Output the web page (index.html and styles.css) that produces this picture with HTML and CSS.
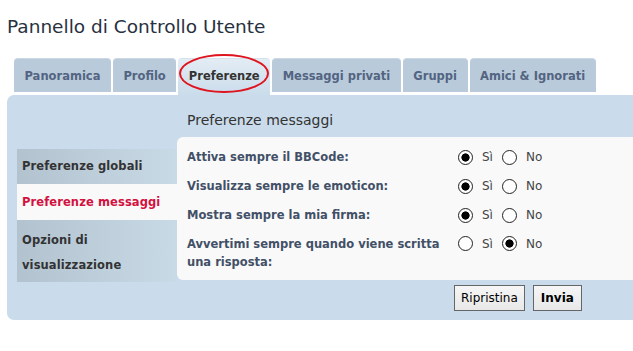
FILE: index.html
```html
<!DOCTYPE html>
<html lang="it">
<head>
<meta charset="utf-8">
<title>Pannello di Controllo Utente</title>
<link rel="stylesheet" href="styles.css">
</head>
<body>
<div class="page">
  <h2 class="title">Pannello di Controllo Utente</h2>
  <ul class="tabs">
    <li class="tab">Panoramica</li>
    <li class="tab">Profilo</li>
    <li class="tab active">Preferenze<span class="mark"></span></li>
    <li class="tab">Messaggi privati</li>
    <li class="tab">Gruppi</li>
    <li class="tab">Amici &amp; Ignorati</li>
  </ul>
  <div class="panel">
    <ul class="nav">
      <li class="nav-item">Preferenze globali</li>
      <li class="nav-item current">Preferenze messaggi</li>
      <li class="nav-item">Opzioni di visualizzazione</li>
    </ul>
    <div class="main">
      <h3 class="heading">Preferenze messaggi</h3>
      <div class="box">
        <div class="row">
          <span class="label">Attiva sempre il BBCode:</span>
          <span class="choices"><input type="radio" name="a" checked><span class="opt">Sì</span><input type="radio" name="a"><span class="opt">No</span></span>
        </div>
        <div class="row">
          <span class="label">Visualizza sempre le emoticon:</span>
          <span class="choices"><input type="radio" name="b" checked><span class="opt">Sì</span><input type="radio" name="b"><span class="opt">No</span></span>
        </div>
        <div class="row">
          <span class="label">Mostra sempre la mia firma:</span>
          <span class="choices"><input type="radio" name="c" checked><span class="opt">Sì</span><input type="radio" name="c"><span class="opt">No</span></span>
        </div>
        <div class="row">
          <span class="label">Avvertimi sempre quando viene scritta una risposta:</span>
          <span class="choices"><input type="radio" name="d"><span class="opt">Sì</span><input type="radio" name="d" checked><span class="opt">No</span></span>
        </div>
      </div>
      <div class="buttons">
        <button class="btn">Ripristina</button>
        <button class="btn primary">Invia</button>
      </div>
    </div>
  </div>
</div>
</body>
</html>
```
FILE: styles.css
```css
html, body {
  margin: 0;
  padding: 0;
  background: #fff;
  overflow: hidden;
}
body {
  font-family: "DejaVu Sans", Verdana, sans-serif;
  color: #333;
}
.page {
  padding: 0 0 0 7px;
}
.title {
  margin: 0;
  padding-top: 15px;
  height: 58px;
  box-sizing: border-box;
  font-size: 18.5px;
  font-weight: normal;
  color: #28313f;
  line-height: 24px;
}
.tabs {
  list-style: none;
  margin: 0 0 0 7px;
  padding: 0;
  display: flex;
  gap: 2px;
  height: 37px;
}
.tab {
  position: relative;
  height: 34px;
  box-sizing: border-box;
  padding: 0 10.5px;
  display: flex;
  align-items: center;
  background: #b9cbda;
  border-top: 1px solid #c9d8e4;
  border-radius: 4px 4px 0 0;
  font-size: 11.5px;
  font-weight: bold;
  color: #536482;
}
.tab.active {
  height: 37px;
  padding-bottom: 3px;
  background: linear-gradient(#e3ecf4, #cadceb);
  border-top-color: #d6e2ec;
  color: #333;
}
.mark {
  position: absolute;
  left: 1px;
  top: -5px;
  width: 90px;
  height: 39px;
  box-sizing: border-box;
  border: 2px solid #e0141e;
  border-radius: 50%;
}
.panel {
  display: flex;
  margin-right: -40px;
  padding: 0 0 9px 10px;
  background: #cadceb;
  border-radius: 7px 0 0 7px;
}
.nav {
  list-style: none;
  margin: 54px 0 0;
  padding: 0;
  width: 160px;
  flex: none;
  align-self: flex-start;
}
.nav-item {
  padding: 5px 6px 5px 5px;
  line-height: 25px;
  font-size: 11.5px;
  font-weight: bold;
  letter-spacing: 0.1px;
  color: #333;
  background: linear-gradient(to right, #b2c2cf, #c9dae7);
}
.nav-item.current {
  background: #f9f9f9;
  color: #d31141;
  padding-top: 6px;
}
.nav-item:last-child {
  padding-top: 8px;
  padding-bottom: 4px;
}
.main {
  flex: 1;
  min-width: 0;
}
.heading {
  margin: 0;
  height: 42px;
  padding: 15px 0 0 10px;
  box-sizing: border-box;
  font-size: 14px;
  font-weight: normal;
  color: #333;
  line-height: 20px;
}
.box {
  background: #f9f9f9;
  border-radius: 6px 0 0 6px;
  padding: 6px 0 3px 10px;
}
.row {
  display: flex;
  align-items: flex-start;
  padding: 6px 0;
  line-height: 17px;
}
.row:last-child {
  line-height: 18px;
  padding-top: 5px;
}
.label {
  width: 271px;
  flex: none;
  font-size: 11.5px;
  font-weight: bold;
  color: #425067;
}
.choices {
  display: flex;
  align-items: center;
  height: 17px;
}
.choices input {
  appearance: none;
  -webkit-appearance: none;
  width: 15px;
  height: 15px;
  margin: 0 9px 0 0;
  border: 1.5px solid #222;
  border-radius: 50%;
  background: #fff;
  box-sizing: border-box;
  flex: none;
}
.choices input:checked {
  background: radial-gradient(circle, #000 0 3.8px, #fff 4.4px);
}
.opt {
  font-size: 12px;
  color: #444;
  margin-right: 9px;
}
.buttons {
  display: flex;
  gap: 8px;
  padding: 5px 0 0 277px;
}
.btn {
  height: 26px;
  padding: 0 6px;
  font-family: "DejaVu Sans", Verdana, sans-serif;
  font-size: 12px;
  color: #000;
  background: linear-gradient(#f6f6f6, #e8e8e8);
  border: 1px solid #666;
  border-radius: 0;
}
.btn.primary {
  font-weight: bold;
  padding: 0 7px;
}
```
